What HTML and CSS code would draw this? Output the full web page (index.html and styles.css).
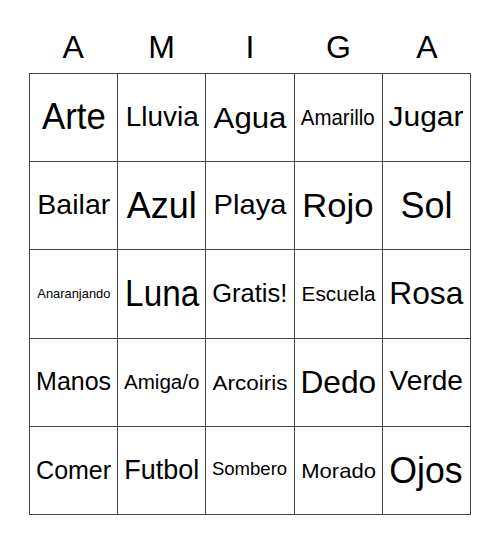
FILE: index.html
```html
<!DOCTYPE html>
<html>
<head>
<meta charset="utf-8">
<link rel="stylesheet" href="styles.css">
</head>
<body>
<div class="card">
  <div class="head">
    <div class="letter">A</div><div class="letter">M</div><div class="letter">I</div><div class="letter">G</div><div class="letter">A</div>
  </div>
  <div class="grid">
    <div class="cell"><span class="word" style="font-size:37px;transform:scaleX(0.94)">Arte</span></div>
    <div class="cell"><span class="word" style="font-size:27px;transform:scaleX(1.035)">Lluvia</span></div>
    <div class="cell"><span class="word" style="font-size:30px;transform:scaleX(1.04)">Agua</span></div>
    <div class="cell"><span class="word" style="font-size:22px;transform:scaleX(0.93)">Amarillo</span></div>
    <div class="cell"><span class="word" style="font-size:28px;transform:scaleX(1.07)">Jugar</span></div>

    <div class="cell"><span class="word" style="font-size:28px;transform:scaleX(1.02)">Bailar</span></div>
    <div class="cell"><span class="word" style="font-size:36px;transform:scaleX(1)">Azul</span></div>
    <div class="cell"><span class="word" style="font-size:28px;transform:scaleX(1.04)">Playa</span></div>
    <div class="cell"><span class="word" style="font-size:33px;transform:scaleX(1.05)">Rojo</span></div>
    <div class="cell"><span class="word" style="font-size:36px;transform:scaleX(1)">Sol</span></div>

    <div class="cell"><span class="word" style="font-size:13px;transform:scaleX(0.99)">Anaranjando</span></div>
    <div class="cell"><span class="word" style="font-size:37px;transform:scaleX(0.9)">Luna</span></div>
    <div class="cell"><span class="word" style="font-size:25px;transform:scaleX(1.02)">Gratis!</span></div>
    <div class="cell"><span class="word" style="font-size:20px;transform:scaleX(1.04)">Escuela</span></div>
    <div class="cell"><span class="word" style="font-size:32px;transform:scaleX(0.99)">Rosa</span></div>

    <div class="cell"><span class="word" style="font-size:25px;transform:scaleX(1)">Manos</span></div>
    <div class="cell"><span class="word" style="font-size:20px;transform:scaleX(1.03)">Amiga/o</span></div>
    <div class="cell"><span class="word" style="font-size:21px;transform:scaleX(1.07)">Arcoiris</span></div>
    <div class="cell"><span class="word" style="font-size:32px;transform:scaleX(0.99)">Dedo</span></div>
    <div class="cell"><span class="word" style="font-size:27px;transform:scaleX(1.04)">Verde</span></div>

    <div class="cell"><span class="word" style="font-size:25px;transform:scaleX(1)">Comer</span></div>
    <div class="cell"><span class="word" style="font-size:27px;transform:scaleX(1)">Futbol</span></div>
    <div class="cell"><span class="word" style="font-size:18px;transform:scaleX(1.03)">Sombero</span></div>
    <div class="cell"><span class="word" style="font-size:21px;transform:scaleX(1.05)">Morado</span></div>
    <div class="cell"><span class="word" style="font-size:36px;transform:scaleX(0.99)">Ojos</span></div>
  </div>
</div>
</body>
</html>
```
FILE: styles.css
```css
html, body {
  margin: 0;
  padding: 0;
  background: #fff;
}
body {
  font-family: "Liberation Sans", Arial, sans-serif;
  color: #000;
}
.card {
  width: 442px;
  margin: 0 auto;
}
.head {
  display: grid;
  grid-template-columns: repeat(5, 1fr);
  height: 73px;
  align-items: end;
}
.letter {
  text-align: center;
  font-size: 32px;
  line-height: 1;
  padding-bottom: 10px;
}
.grid {
  display: grid;
  grid-template-columns: repeat(5, 1fr);
  grid-template-rows: repeat(5, 1fr);
  width: 442px;
  height: 442px;
  box-sizing: border-box;
  border-left: 1px solid #444;
  border-top: 1px solid #444;
}
.cell {
  display: flex;
  align-items: center;
  justify-content: center;
  border-right: 1px solid #444;
  border-bottom: 1px solid #444;
  overflow: hidden;
}
.word {
  display: inline-block;
  line-height: 1.1;
  white-space: nowrap;
  transform-origin: center;
}
```
